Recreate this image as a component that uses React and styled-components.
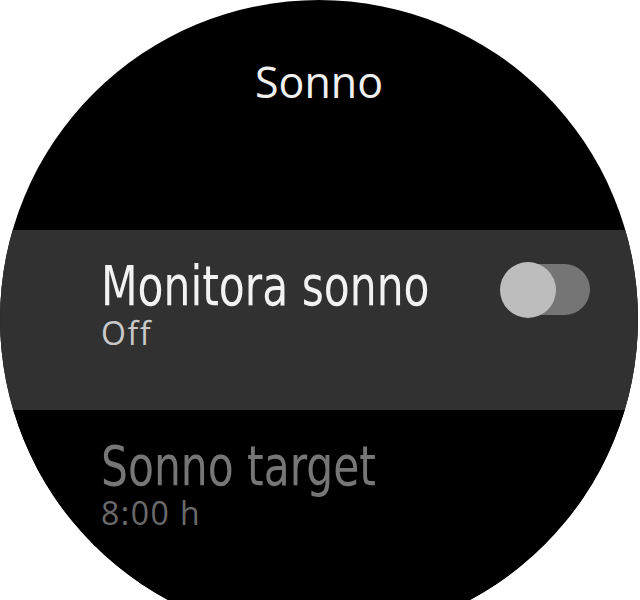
import React from "react";
import styled, { createGlobalStyle } from "styled-components";

const Global = createGlobalStyle`
  html, body { margin: 0; padding: 0; background: #ffffff; }
  body { width: 640px; height: 600px; overflow: hidden; }
`;

const Page = styled.div`
  width: 640px;
  height: 600px;
  overflow: hidden;
  background: #ffffff;
`;

const Face = styled.div`
  width: 638px;
  height: 638px;
  border-radius: 50%;
  background: #000000;
  overflow: hidden;
  display: flex;
  flex-direction: column;
`;

const Header = styled.div`
  height: 230px;
  box-sizing: border-box;
  padding-top: 60px;
  text-align: center;
  font-family: "Open Sans", sans-serif;
  font-size: 43px;
  line-height: 43px;
  color: #f0f0f0;
`;

const Row = styled.div`
  height: ${(p) => p.$h}px;
  box-sizing: border-box;
  padding: 26px 48px 0 101px;
  background: ${(p) => (p.$active ? "#313131" : "#000000")};
  display: flex;
  align-items: flex-start;
  justify-content: space-between;
`;

const TextBlock = styled.div`
  display: flex;
  flex-direction: column;
  align-items: flex-start;
`;

const Label = styled.div`
  display: inline-block;
  white-space: nowrap;
  font-family: "DejaVu Sans Condensed", "DejaVu Sans", sans-serif;
  font-stretch: condensed;
  font-size: 56px;
  line-height: 60px;
  transform: scaleX(0.842);
  transform-origin: left center;
  color: ${(p) => (p.$dim ? "#767676" : "#f2f2f2")};
`;

const Value = styled.div`
  font-family: "Open Sans", sans-serif;
  font-size: 32px;
  line-height: 34px;
  letter-spacing: 1.5px;
  color: ${(p) => (p.$dim ? "#6a6a6a" : "#c9c9c9")};
`;

const Track = styled.div`
  position: relative;
  margin-top: 8px;
  width: 87px;
  height: 51px;
  border-radius: 26px;
  background: #757575;
`;

const Knob = styled.div`
  position: absolute;
  left: -3px;
  top: -2px;
  width: 56px;
  height: 56px;
  border-radius: 50%;
  background: #bdbdbd;
`;

export default function App() {
  return (
    <Page>
      <Global />
      <Face>
        <Header>Sonno</Header>
        <Row $active $h={180}>
          <TextBlock>
            <Label>Monitora sonno</Label>
            <Value>Off</Value>
          </TextBlock>
          <Track>
            <Knob />
          </Track>
        </Row>
        <Row $h={228}>
          <TextBlock>
            <Label $dim>Sonno target</Label>
            <Value $dim>8:00 h</Value>
          </TextBlock>
        </Row>
      </Face>
    </Page>
  );
}
